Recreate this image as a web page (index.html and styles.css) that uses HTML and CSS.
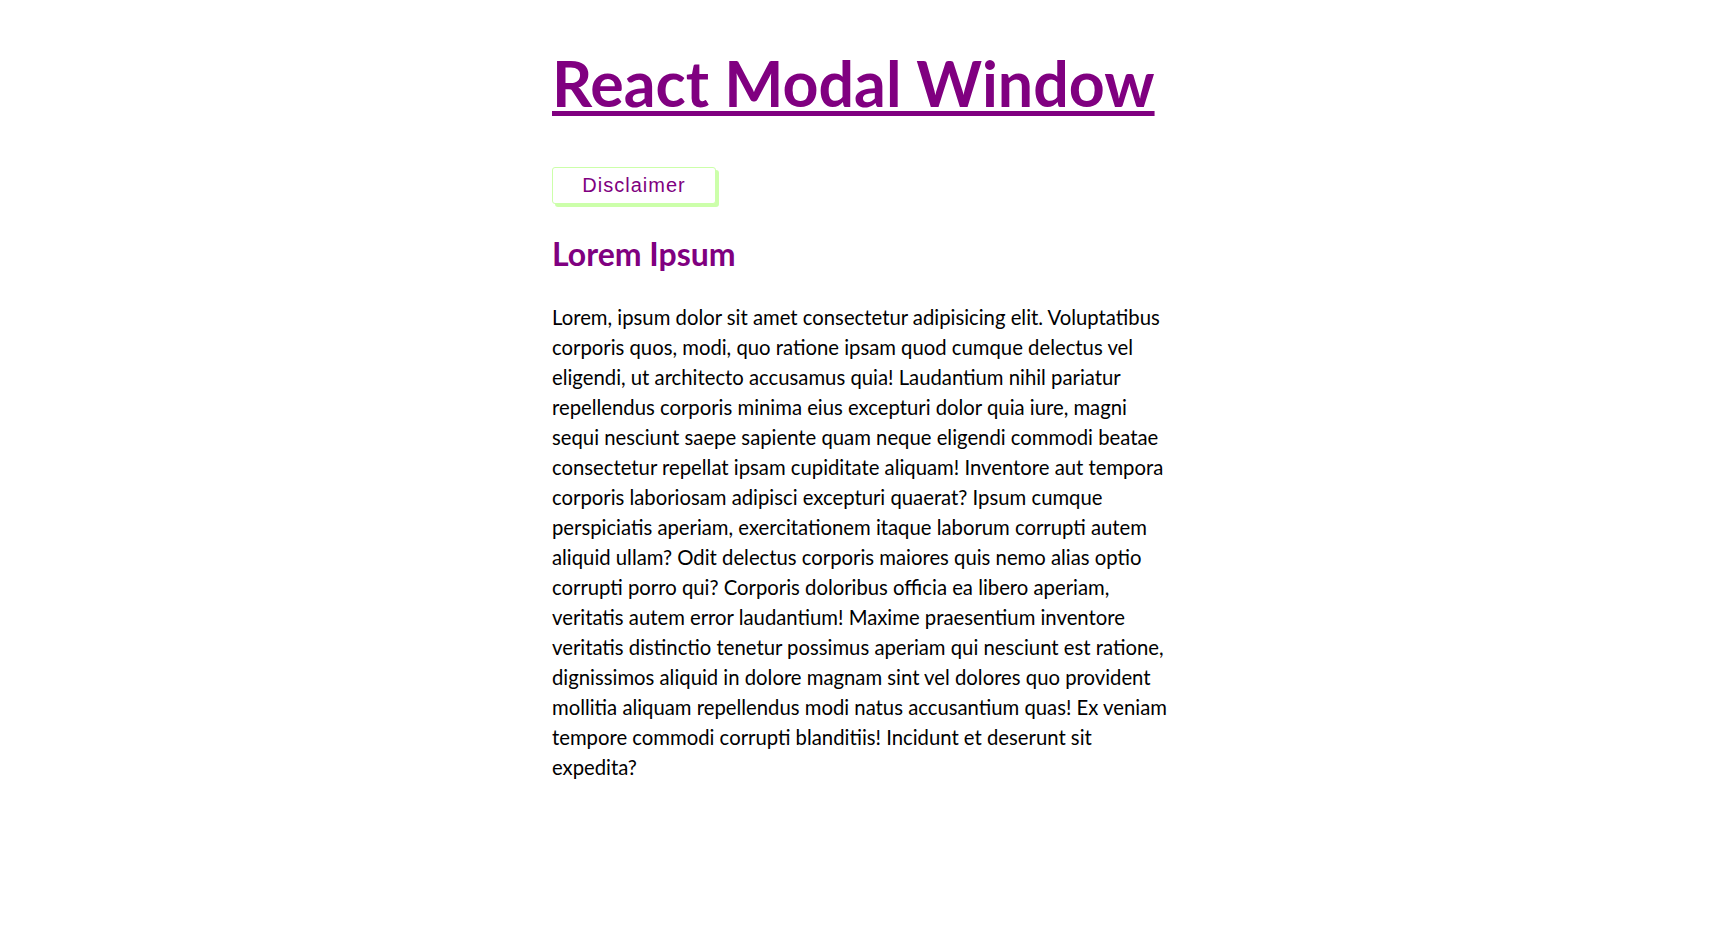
FILE: index.html
```html
<!DOCTYPE html>
<html lang="en">
<head>
<meta charset="utf-8">
<title>React Modal Window</title>
<link rel="stylesheet" href="styles.css">
</head>
<body>
<main class="page">
  <h1 class="title"><a class="title-link" href="#">React Modal Window</a></h1>
  <button class="btn" type="button">Disclaimer</button>
  <h2 class="heading">Lorem Ipsum</h2>
  <p class="text">Lorem, ipsum dolor sit amet consectetur adipisicing elit. Voluptatibus corporis quos, modi, quo ratione ipsam quod cumque delectus vel eligendi, ut architecto accusamus quia! Laudantium nihil pariatur repellendus corporis minima eius excepturi dolor quia iure, magni sequi nesciunt saepe sapiente quam neque eligendi commodi beatae consectetur repellat ipsam cupiditate aliquam! Inventore aut tempora corporis laboriosam adipisci excepturi quaerat? Ipsum cumque perspiciatis aperiam, exercitationem itaque laborum corrupti autem aliquid ullam? Odit delectus corporis maiores quis nemo alias optio corrupti porro qui? Corporis doloribus officia ea libero aperiam, veritatis autem error laudantium! Maxime praesentium inventore veritatis distinctio tenetur possimus aperiam qui nesciunt est ratione, dignissimos aliquid in dolore magnam sint vel dolores quo provident mollitia aliquam repellendus modi natus accusantium quas! Ex veniam tempore commodi corrupti blanditiis! Incidunt et deserunt sit expedita?</p>
</main>
</body>
</html>
```

FILE: styles.css
```css
html, body {
  margin: 0;
  padding: 0;
  background: #fff;
}
body {
  font-family: Lato, "Open Sans", sans-serif;
  color: #000;
}
.page {
  width: 624px;
  margin: 0 auto;
  padding-top: 43px;
  display: flex;
  flex-direction: column;
  align-items: flex-start;
}
.title {
  margin: 0;
  font-size: 62.7px;
  line-height: 80px;
  font-weight: 700;
  white-space: nowrap;
}
.title-link {
  color: #800080;
  text-decoration: underline;
  text-decoration-thickness: 5px;
  text-underline-offset: 4px;
}
.btn {
  margin-top: 44px;
  width: 164px;
  height: 37px;
  border: 1px solid #ccffaa;
  border-radius: 3px;
  box-shadow: 3px 3px 0 #ccffaa;
  background: #fff;
  color: #800080;
  font-family: "Liberation Sans", Arial, sans-serif;
  font-size: 20px;
  letter-spacing: 1px;
  padding: 0;
  cursor: pointer;
}
.heading {
  margin: 30px 0 0;
  font-size: 32px;
  line-height: 40px;
  font-weight: 700;
  color: #800080;
}
.text {
  margin: 28px 0 0;
  font-size: 20.3px;
  line-height: 30px;
}
```
